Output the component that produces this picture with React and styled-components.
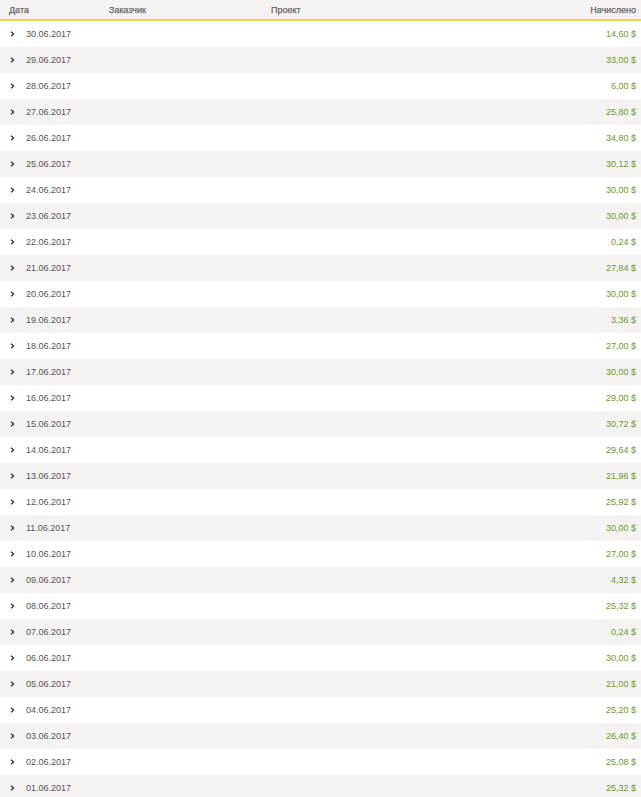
import React from "react"
import styled, { createGlobalStyle } from "styled-components"

const amounts = [
  "14,60", "33,00", "6,00", "25,80", "34,80", "30,12", "30,00", "30,00", "0,24", "27,84",
  "30,00", "3,36", "27,00", "30,00", "29,00", "30,72", "29,64", "21,96", "25,92", "30,00",
  "27,00", "4,32", "25,32", "0,24", "30,00", "21,00", "25,20", "26,40", "25,08", "25,32",
]

const rows = amounts.map((amount, i) => {
  const day = String(30 - i).padStart(2, "0")
  return { date: `${day}.06.2017`, amount: `${amount} $` }
})

const GlobalStyle = createGlobalStyle`
  body {
    margin: 0;
    background: #fff;
    font-family: "Liberation Sans", Arial, sans-serif;
  }
`

const Table = styled.div`
  width: 641px;
  display: flex;
  flex-direction: column;
`

const HeadRow = styled.div`
  display: grid;
  grid-template-columns: 100px 162px 1fr auto;
  align-items: center;
  height: 19px;
  padding: 0 5px 0 9px;
  background: #f4f3f1;
  border-bottom: 2px solid #f2d34a;
`

const HeadCell = styled.div`
  font-size: 9px;
  color: #666;
  -webkit-text-stroke: 0.25px #666;
  text-align: ${(p) => (p.$right ? "right" : "left")};
`

const Row = styled.div`
  display: grid;
  grid-template-columns: 100px 162px 1fr auto;
  align-items: center;
  height: 26px;
  padding: 0 5px 0 9px;
  background: ${(p) => (p.$alt ? "#f4f3f1" : "#fff")};
`

const DateCell = styled.div`
  display: flex;
  align-items: center;
  gap: 11px;
  font-size: 9px;
  color: #555;
`

const Chevron = styled.svg`
  width: 5px;
  height: 6px;
  flex: none;
  margin-left: 1px;
`

const Amount = styled.div`
  font-size: 9px;
  color: #689a2c;
  text-align: right;
`

export default function App() {
  return (
    <>
      <GlobalStyle />
      <Table>
        <HeadRow>
          <HeadCell>Дата</HeadCell>
          <HeadCell>Заказчик</HeadCell>
          <HeadCell>Проект</HeadCell>
          <HeadCell $right>Начислено</HeadCell>
        </HeadRow>
        {rows.map((r, i) => (
          <Row key={r.date} $alt={i % 2 === 1}>
            <DateCell>
              <Chevron viewBox="0 0 5 6">
                <path d="M1 0.8 L3.6 3 L1 5.2" fill="none" stroke="#333" strokeWidth="1.3" />
              </Chevron>
              {r.date}
            </DateCell>
            <div />
            <div />
            <Amount>{r.amount}</Amount>
          </Row>
        ))}
      </Table>
    </>
  )
}
